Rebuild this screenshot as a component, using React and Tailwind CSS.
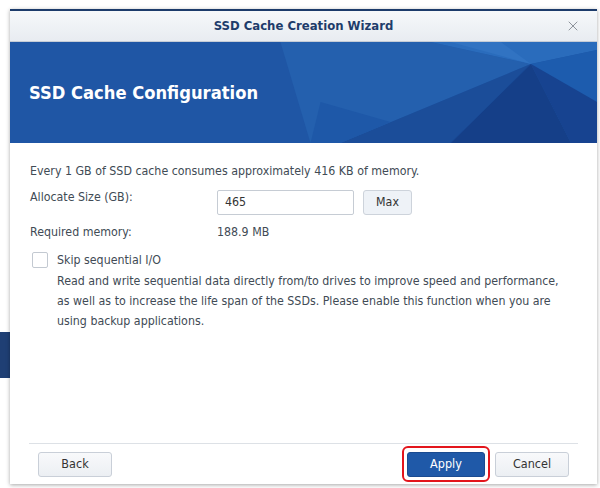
import { X } from 'lucide-react'

const font = { fontFamily: '"DejaVu Sans Condensed", "DejaVu Sans", sans-serif' }

function Banner() {
  return (
    <div className="relative h-[101px] bg-[#1f56a5] overflow-hidden">
      <svg className="absolute inset-0 w-full h-full" viewBox="0 0 586 101" preserveAspectRatio="none">
        <polygon points="270,0 420,0 520,22 330,101 300,101" fill="#2460ae" />
        <polygon points="420,0 586,0 586,8 520,22" fill="#2a6cbc" />
        <polygon points="330,101 520,22 440,101" fill="#1b4d99" />
        <polygon points="520,22 586,8 586,60" fill="#1d5cae" />
        <polygon points="520,22 586,60 586,101 560,101" fill="#174390" />
        <polygon points="520,22 560,101 440,101" fill="#153f88" />
        <polygon points="300,101 330,101 380,80 310,60" fill="#1e58a8" />
        <polygon points="440,0 490,0 520,22" fill="#3173c2" />
      </svg>
      <div className="relative h-full flex items-center px-[19px]">
        <h1 className="text-white text-[18.2px] font-bold">SSD Cache Configuration</h1>
      </div>
    </div>
  )
}

function Button({ children, primary }) {
  if (primary) {
    return (
      <button className="h-[25px] w-[78px] rounded-[3px] bg-[#1f59a8] border border-[#1a4b91] text-white text-[12.5px]">
        {children}
      </button>
    )
  }
  return (
    <button className="h-[25px] w-[74px] rounded-[3px] bg-gradient-to-b from-[#f8f9fb] to-[#eceff3] border border-[#c9cfd8] text-[#333] text-[12.5px]">
      {children}
    </button>
  )
}

export default function App() {
  return (
    <div className="relative w-[600px] h-[488px] bg-white overflow-hidden" style={font}>
      <div className="absolute left-0 top-[332px] w-[10px] h-[46px] bg-[#1f3f74]" />
      <div className="absolute left-[10px] top-[9px] w-[587px] h-[475px] bg-white border-t-2 border-[#1c3b6b] shadow-[0_1px_4px_rgba(0,0,0,0.35)] flex flex-col">
        <div className="relative h-[31px] flex items-center justify-center bg-gradient-to-b from-[#f6f8fa] to-[#e8ecf1] border-b border-[#c5ccd6]">
          <span className="text-[13px] font-bold text-[#1e3c6b]">SSD Cache Creation Wizard</span>
          <X className="absolute right-[16px] top-[7px] w-[16px] h-[16px] text-[#8d939b]" strokeWidth={1.5} />
        </div>
        <Banner />
        <div className="flex-1 px-[20px] pt-[18px] text-[12.3px] text-[#414b55]">
          <p className="leading-[20px]">Every 1 GB of SSD cache consumes approximately 416 KB of memory.</p>
          <div className="flex items-start mt-[6px]">
            <span className="w-[187px] leading-[20px]">Allocate Size (GB):</span>
            <div className="mt-[3px] w-[137px] h-[25px] border border-[#c6ccd4] rounded-[2px] flex items-center px-[7px] text-[#333]">465</div>
            <button className="mt-[3px] ml-[9px] h-[25px] w-[49px] rounded-[3px] bg-[#eef2f7] border border-[#cdd3db] text-[#333]">Max</button>
          </div>
          <div className="flex items-center mt-[7px] leading-[20px]">
            <span className="w-[187px]">Required memory:</span>
            <span>188.9 MB</span>
          </div>
          <div className="flex mt-[8px]">
            <div className="w-[16px] h-[16px] mt-[2px] ml-[2px] border border-[#c3c9d1] rounded-[2px] bg-white shrink-0" />
            <div className="ml-[9px] leading-[20px] w-[505px]">
              <p>Skip sequential I/O</p>
              <p className="mt-[1px]">
                Read and write sequential data directly from/to drives to improve speed and performance, as well as to increase the life span of the SSDs. Please enable this function when you are using backup applications.
              </p>
            </div>
          </div>
        </div>
        <div className="mx-[19px] border-t border-[#dde1e6]" />
        <div className="flex items-center justify-between px-[28px] pt-[7px] pb-[7px]">
          <Button>Back</Button>
          <div className="flex items-center gap-[10px]">
            <div className="rounded-[6px] border-2 border-[#e3151c] p-[3px] -m-[5px]">
              <Button primary>Apply</Button>
            </div>
            <Button>Cancel</Button>
          </div>
        </div>
      </div>
    </div>
  )
}
